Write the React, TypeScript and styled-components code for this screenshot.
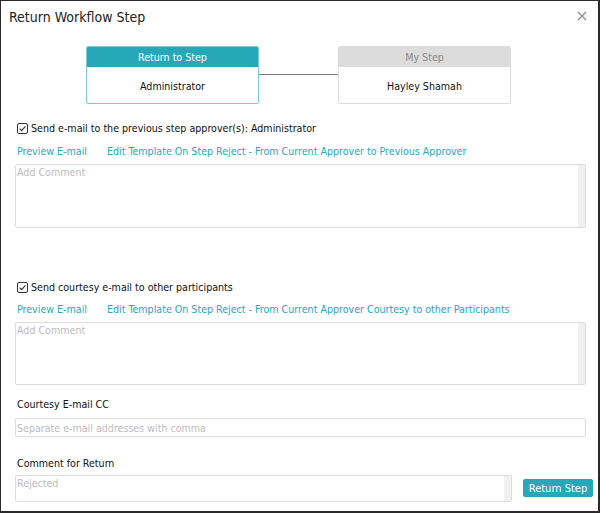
import styled, { createGlobalStyle } from 'styled-components'

const teal = '#27a8b9'
const font = '"DejaVu Sans Condensed", "DejaVu Sans", sans-serif'

const Global = createGlobalStyle`
  html, body {
    margin: 0;
    padding: 0;
    background: #fff;
  }
  body {
    font-family: ${font};
    font-size: 10.6px;
    color: #222;
  }
`

const Dialog = styled.div`
  box-sizing: border-box;
  width: 600px;
  height: 513px;
  border: 1px solid #2a2a2a;
  border-right-width: 2px;
  border-bottom-width: 2px;
  background: #fff;
  display: flex;
  flex-direction: column;
`

const Header = styled.div`
  display: flex;
  align-items: center;
  justify-content: space-between;
  padding: 7px 10px 0 8px;
  height: 18px;
`

const Title = styled.div`
  font-size: 14px;
  line-height: 18px;
  color: #222;
`

const Close = styled.button`
  border: 0;
  background: none;
  padding: 0;
  width: 12px;
  height: 12px;
  display: flex;
  align-items: center;
  justify-content: center;
  margin-top: -2px;
`

const Steps = styled.div`
  display: flex;
  align-items: center;
  justify-content: center;
  margin-top: 20px;
  padding-right: 2px;
`

const StepBox = styled.div<{ $active?: boolean }>`
  box-sizing: border-box;
  width: 173px;
  height: 58px;
  border: 1px solid ${(p) => (p.$active ? '#7ccbd6' : '#dcdcdc')};
  border-radius: 2px;
  display: flex;
  flex-direction: column;
  overflow: hidden;
`

const StepHead = styled.div<{ $active?: boolean }>`
  height: 20px;
  line-height: 20px;
  text-align: center;
  background: ${(p) => (p.$active ? teal : '#dcdcdc')};
  color: ${(p) => (p.$active ? '#fff' : '#8a8a8a')};
`

const StepBody = styled.div`
  flex: 1;
  display: flex;
  align-items: center;
  justify-content: center;
  color: #111;
  padding-top: 1px;
`

const Connector = styled.div`
  width: 79px;
  height: 1px;
  background: #7a7a7a;
  margin-top: -2px;
`

const Content = styled.div`
  display: flex;
  flex-direction: column;
  padding: 0 0 0 14px;
`

const CheckRow = styled.label<{ $top: number }>`
  display: flex;
  align-items: center;
  gap: 3px;
  height: 14px;
  padding-left: 2px;
  margin-top: ${(p) => p.$top}px;
  color: #111;
`

const Links = styled.div<{ $top: number }>`
  display: flex;
  gap: 20px;
  height: 14px;
  align-items: center;
  padding-left: 2px;
  margin-top: ${(p) => p.$top}px;
`

const Link = styled.a`
  color: ${teal};
  text-decoration: none;
  cursor: pointer;
`

const AreaBox = styled.div<{ $h: number; $top: number; $w?: number }>`
  box-sizing: border-box;
  display: flex;
  flex-shrink: 0;
  width: ${(p) => p.$w ?? 571}px;
  height: ${(p) => p.$h}px;
  margin-top: ${(p) => p.$top}px;
  border: 1px solid #dcdcdc;
  border-radius: 2px;
  overflow: hidden;
`

const AreaText = styled.textarea`
  flex: 1;
  min-width: 0;
  margin: 0;
  padding: 1px 1px;
  border: 0;
  resize: none;
  font-family: ${font};
  font-size: 10.6px;
  color: #222;
  outline: none;
  &::placeholder {
    color: #bcbcbc;
  }
`

const Gutter = styled.div`
  width: 7px;
  flex-shrink: 0;
  background: #f0f0f0;
`

const Label = styled.div<{ $top: number }>`
  height: 14px;
  line-height: 14px;
  padding-left: 2px;
  margin-top: ${(p) => p.$top}px;
  color: #111;
`

const Input = styled.input`
  box-sizing: border-box;
  width: 571px;
  height: 19px;
  margin-top: 7px;
  padding: 0 1px;
  border: 1px solid #dcdcdc;
  border-radius: 2px;
  font-family: ${font};
  font-size: 10.6px;
  outline: none;
  &::placeholder {
    color: #bcbcbc;
  }
`

const Footer = styled.div`
  display: flex;
  align-items: flex-start;
  gap: 11px;
  margin-top: 5px;
`

const Button = styled.button`
  box-sizing: border-box;
  flex-shrink: 0;
  height: 18px;
  width: 70px;
  margin-top: 4px;
  padding: 0;
  border: 0;
  border-radius: 2px;
  background: ${teal};
  color: #fff;
  font-family: ${font};
  font-size: 11px;
`

const CheckBox = () => (
  <svg width="11" height="11" viewBox="0 0 11 11">
    <rect x="0.5" y="0.5" width="10" height="10" rx="1.5" fill="#fff" stroke="#333" />
    <path d="M2.6 5.6 L4.6 7.6 L8.4 3.4" fill="none" stroke="#333" strokeWidth="1.1" />
  </svg>
)

const Comment = ({ h, top, w, placeholder }: { h: number; top: number; w?: number; placeholder: string }) => (
  <AreaBox $h={h} $top={top} $w={w}>
    <AreaText placeholder={placeholder} />
    <Gutter />
  </AreaBox>
)

export default function App() {
  return (
    <>
      <Global />
      <Dialog>
        <Header>
          <Title>Return Workflow Step</Title>
          <Close aria-label="close">
            <svg width="10" height="10" viewBox="0 0 10 10">
              <path d="M1 1 L9 9 M9 1 L1 9" stroke="#8a8a8a" strokeWidth="1.2" />
            </svg>
          </Close>
        </Header>

        <Steps>
          <StepBox $active>
            <StepHead $active>Return to Step</StepHead>
            <StepBody>Administrator</StepBody>
          </StepBox>
          <Connector />
          <StepBox>
            <StepHead>My Step</StepHead>
            <StepBody>Hayley Shamah</StepBody>
          </StepBox>
        </Steps>

        <Content>
          <CheckRow $top={17}>
            <CheckBox />
            Send e-mail to the previous step approver(s): Administrator
          </CheckRow>
          <Links $top={9}>
            <Link>Preview E-mail</Link>
            <Link>Edit Template On Step Reject - From Current Approver to Previous Approver</Link>
          </Links>
          <Comment h={64} top={6} placeholder="Add Comment" />

          <CheckRow $top={52}>
            <CheckBox />
            Send courtesy e-mail to other participants
          </CheckRow>
          <Links $top={8}>
            <Link>Preview E-mail</Link>
            <Link>Edit Template On Step Reject - From Current Approver Courtesy to other Participants</Link>
          </Links>
          <Comment h={63} top={6} placeholder="Add Comment" />

          <Label $top={12}>Courtesy E-mail CC</Label>
          <Input placeholder="Separate e-mail addresses with comma" />

          <Label $top={19}>Comment for Return</Label>
          <Footer>
            <Comment h={27} top={0} w={497} placeholder="Rejected" />
            <Button>Return Step</Button>
          </Footer>
        </Content>
      </Dialog>
    </>
  )
}
